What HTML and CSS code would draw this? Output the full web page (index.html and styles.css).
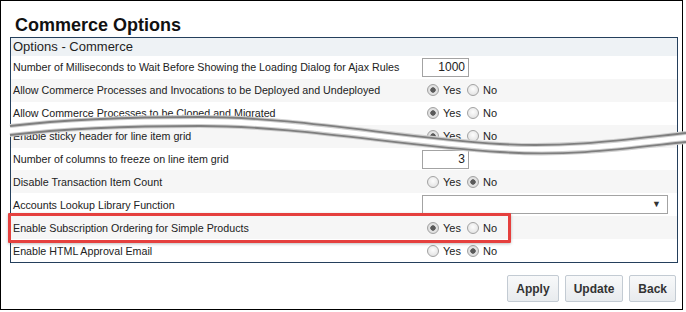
FILE: index.html
```html
<!DOCTYPE html>
<html lang="en">
<head>
    <meta charset="UTF-8">
    <meta name="viewport" content="width=device-width, initial-scale=1.0">
    <title>Commerce Options</title>
    <link rel="stylesheet" href="styles.css">
</head>
<body>
    <div class="frame">
        <h1 class="title">Commerce Options</h1>

        <section class="panel">
            <div class="panel-head">Options - Commerce</div>

            <div class="row">
                <div class="label">Number of Milliseconds to Wait Before Showing the Loading Dialog for Ajax Rules</div>
                <div class="value"><input type="text" class="num" value="1000"></div>
            </div>
            <div class="row alt">
                <div class="label">Allow Commerce Processes and Invocations to be Deployed and Undeployed</div>
                <div class="value">
                    <label class="opt"><input type="radio" name="deploy" checked>Yes</label>
                    <label class="opt"><input type="radio" name="deploy">No</label>
                </div>
            </div>
            <div class="row">
                <div class="label">Allow Commerce Processes to be Cloned and Migrated</div>
                <div class="value">
                    <label class="opt"><input type="radio" name="clone" checked>Yes</label>
                    <label class="opt"><input type="radio" name="clone">No</label>
                </div>
            </div>
            <div class="row alt">
                <div class="label">Enable sticky header for line item grid</div>
                <div class="value">
                    <label class="opt"><input type="radio" name="sticky" checked>Yes</label>
                    <label class="opt"><input type="radio" name="sticky">No</label>
                </div>
            </div>
            <div class="row">
                <div class="label">Number of columns to freeze on line item grid</div>
                <div class="value"><input type="text" class="num" value="3"></div>
            </div>
            <div class="row alt">
                <div class="label">Disable Transaction Item Count</div>
                <div class="value">
                    <label class="opt"><input type="radio" name="count">Yes</label>
                    <label class="opt"><input type="radio" name="count" checked>No</label>
                </div>
            </div>
            <div class="row">
                <div class="label">Accounts Lookup Library Function</div>
                <div class="value"><span class="lookup"></span></div>
            </div>
            <div class="row alt">
                <div class="label">Enable Subscription Ordering for Simple Products</div>
                <div class="value">
                    <label class="opt"><input type="radio" name="subs" checked>Yes</label>
                    <label class="opt"><input type="radio" name="subs">No</label>
                </div>
            </div>
            <div class="row">
                <div class="label">Enable HTML Approval Email</div>
                <div class="value">
                    <label class="opt"><input type="radio" name="html">Yes</label>
                    <label class="opt"><input type="radio" name="html" checked>No</label>
                </div>
            </div>
        </section>

        <div class="actions">
            <button>Apply</button>
            <button>Update</button>
            <button>Back</button>
        </div>

        <!-- annotation box round the subscription row -->
        <div class="highlight"></div>

        <!-- torn paper break -->
        <svg class="tear" width="686" height="312" viewBox="0 0 686 312">
            <path class="tear-fill" d="M10,126 C60,120 120,117 200,117 C300,117 400,138 500,144 C570,148 630,139 686,133 L686,142 C630,148 570,157 500,152 C400,146 300,126 200,126 C120,126 60,129 10,135 Z"/>
            <path class="tear-soft" d="M10,126 C60,120 120,117 200,117 C300,117 400,138 500,144 C570,148 630,139 686,133"/>
            <path class="tear-soft" d="M10,135 C60,129 120,126 200,126 C300,126 400,146 500,152 C570,157 630,148 686,142"/>
            <path class="tear-edge" d="M10,126 C60,120 120,117 200,117 C300,117 400,138 500,144 C570,148 630,139 686,133"/>
            <path class="tear-edge" d="M10,135 C60,129 120,126 200,126 C300,126 400,146 500,152 C570,157 630,148 686,142"/>
        </svg>
    </div>
</body>
</html>
```

FILE: styles.css
```css
:root{
    --text:#222;
    --navy:#243f5c;
    --head:#eef2f5;
    --stripe:#f6f6f6;
    --field:#a3a3a3;
}

*{
    box-sizing: border-box;
    margin: 0;
    font-family: "Liberation Sans", Arial, sans-serif;
}

body{
    background: #fff;
    color: var(--text);
}

.frame{
    position: relative;
    width: 683px;
    height: 310px;
    border: 1px solid #000;
    padding: 0 4px 0 9px;
}

.title{
    margin: 14px 0 2px 5px;
    font-size: 18px;
    line-height: 20px;
    font-weight: 700;
    color: #111;
}

.panel{
    width: 668px;
    border: 1px solid var(--navy);
}

.panel-head{
    height: 18px;
    line-height: 18px;
    padding-left: 2px;
    background: var(--head);
    font-size: 13px;
    color: #1e1e1e;
}

.row{
    display: grid;
    grid-template-columns: 411px 1fr;
    align-items: center;
    height: 22.9px;
    font-size: 10.7px;
}
.row.alt{
    background: var(--stripe);
}
.label{
    padding-left: 2px;
    white-space: nowrap;
}
.value{
    display: flex;
    align-items: center;
    font-size: 11px;
}

.num{
    width: 47px;
    height: 19px;
    border: 1px solid var(--field);
    padding: 0 3px;
    text-align: right;
    font-size: 12px;
    color: #222;
    outline: none;
}

.opt{
    display: flex;
    align-items: center;
    gap: 4px;
    margin-left: 5px;
}
.opt + .opt{
    margin-left: 6px;
}
.opt input{
    appearance: none;
    width: 12px;
    height: 12px;
    margin: 0;
    border: 1px solid #a2a2a2;
    border-radius: 50%;
    background: radial-gradient(circle at 50% 40%, #fdfdfd, #dcdcdc);
}
.opt input:checked{
    background: radial-gradient(circle, #5a5a5a 0 2.4px, #e6e6e6 3px, #d2d2d2);
}

.lookup{
    position: relative;
    display: block;
    width: 246px;
    height: 19px;
    border: 1px solid var(--field);
    background: #fff;
}
.lookup::after{
    content: "\25BC";
    position: absolute;
    right: 6px;
    top: 3px;
    font-size: 9px;
    color: #333;
}

.actions{
    display: flex;
    justify-content: flex-end;
    gap: 6px;
    margin-top: 12px;
    padding-right: 2px;
}
.actions button{
    appearance: none;
    height: 27px;
    padding: 0 8px;
    border: 1px solid #c3cbd3;
    border-radius: 2px;
    background: linear-gradient(#f8f9fa, #e8ebee);
    font-size: 12px;
    font-weight: 700;
    color: #333;
}

.highlight{
    position: absolute;
    left: 7px;
    top: 212px;
    width: 503px;
    height: 30px;
    border: 3px solid #e5403e;
    border-radius: 1px;
    box-shadow: 0 1px 3px rgba(0,0,0,0.25);
}

.tear{
    position: absolute;
    left: -1px;
    top: -1px;
    pointer-events: none;
}
.tear-fill{
    fill: #fff;
}
.tear-soft{
    fill: none;
    stroke: #cfcfcf;
    stroke-width: 4;
}
.tear-edge{
    fill: none;
    stroke: #7f7f7f;
    stroke-width: 1.8;
}
```
